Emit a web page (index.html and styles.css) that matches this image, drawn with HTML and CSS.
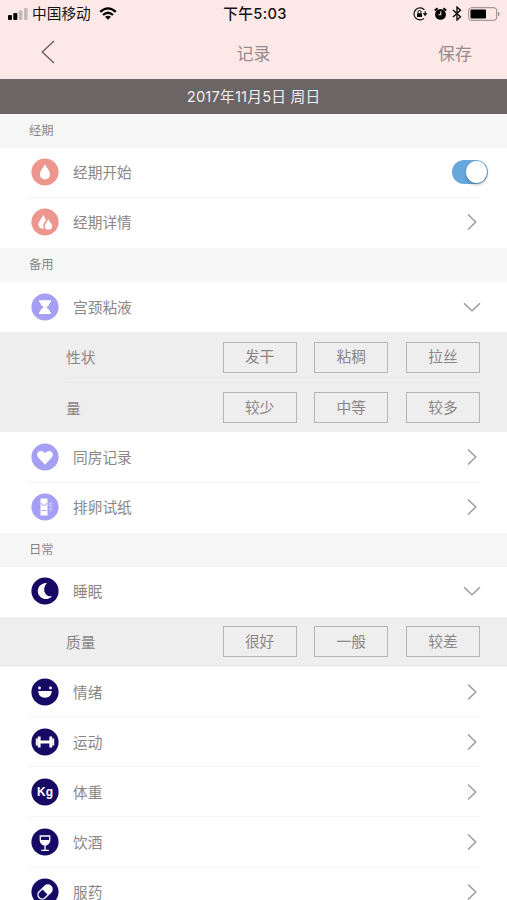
FILE: index.html
```html
<!DOCTYPE html>
<html lang="zh-CN">
<head>
<meta charset="utf-8">
<meta name="viewport" content="width=device-width, initial-scale=1">
<title>记录</title>
<link rel="stylesheet" href="styles.css">
</head>
<body>
<svg width="0" height="0" class="defs" aria-hidden="true">
  <symbol id="right" viewBox="0 0 18 18"><path d="M5 1.5 12.8 9 5 16.5" fill="none" stroke="#999" stroke-width="1.4"/></symbol>
  <symbol id="down" viewBox="0 0 18 18"><path d="M1 5.3 9 12.8 17 5.3" fill="none" stroke="#999" stroke-width="1.4"/></symbol>
</svg>
<header class="top">
  <div class="status">
    <div class="carrier">
      <svg width="20" height="12" viewBox="0 0 20 12"><rect y="7" width="4" height="5" rx="1"/><rect x="5.3" y="5" width="4" height="7" rx="1"/><g fill="#c3b9b9"><rect x="10.8" y="2.5" width="3.7" height="9.5" rx="1"/><rect x="16" y="0" width="3.7" height="12" rx="1"/></g></svg>
      <span>中国移动</span>
      <svg class="wifi" width="18" height="13" viewBox="0 0 18 13"><g fill="none" stroke="#000" stroke-width="2.3"><path d="M1.2 4.9Q9-2.2 16.8 4.9"/><path d="M4 8Q9 3.6 14 8"/></g><path d="M6 9.8Q9 7.5 12 9.8L9 12.8Z"/></svg>
    </div>
    <div class="clock">下午5:03</div>
    <div class="indicators">
      <svg width="15" height="14" viewBox="0 0 15 14"><path d="M11.4 2.8A6 6 0 1 0 11 11.4M12.2 4.2V7" fill="none" stroke="#111" stroke-width="1.2"/><path d="M9.8 6.2h4.6l-2.3 3z"/><rect x="4" y="6.2" width="5" height="3.8" rx=".5"/><path d="M5 6.3V5a1.5 1.5 0 0 1 3 0v1.3" fill="none" stroke="#111"/></svg>
      <svg class="alarm" width="13" height="14" viewBox="0 0 13 14"><circle cx="6.5" cy="7.4" r="5.4"/><path d="M.8 3.6 3.6 1.3M12.2 3.6 9.4 1.3" stroke="#000" stroke-width="2"/><path d="M6.8 4.2v3.5H4.3" fill="none" stroke="#fce9e7" stroke-width="1.1"/></svg>
      <svg class="bt" width="10" height="15" viewBox="0 0 10 15"><path d="M1 4 8.5 10.8 5 14V1L8.5 4.2 1 11" fill="none" stroke="#000" stroke-width="1.3"/></svg>
      <svg class="battery" width="32" height="14" viewBox="0 0 32 14"><rect x=".7" y=".7" width="28" height="12.6" rx="2.8" fill="none" stroke="#8f8685"/><rect x="2.5" y="2.4" width="15.5" height="9.2" rx="1"/><path d="M30 4.8q1.6 1 1.6 2.2T30 9.2z" fill="#8f8685"/></svg>
    </div>
  </div>
  <nav class="nav">
    <svg width="14" height="24" viewBox="0 0 14 24"><path d="M13 1 1.3 12 13 23" fill="none" stroke="#6b6162" stroke-width="1.4"/></svg>
    <h1>记录</h1>
    <span class="save">保存</span>
  </nav>
</header>
<div class="date">2017年11月5日 周日</div>
<main>
  <h2>经期</h2>
  <div class="row"><svg class="icon coral" viewBox="0 0 28 28"><circle cx="14" cy="14" r="13.6"/><path fill="#fff" d="M14 6.2C12.2 9.8 9 12.7 9 16.4a5 5 0 0 0 10 0C19 12.7 15.8 9.8 14 6.2z"/></svg><span>经期开始</span><i class="toggle"></i></div>
  <div class="row last"><svg class="icon coral" viewBox="0 0 28 28"><circle cx="14" cy="14" r="13.6"/><path fill="#fff" d="M12.3 6.8C10.9 10.2 7.5 13.4 7.5 16.4c0 2.6 2 4.4 4.5 4.4 1 0 1-.4.7-1.3-1.1-3.3.6-5.7 2.4-7.3z"/><path fill="#fff" d="M17.4 11.1c-1 2.8-3.6 4.6-3.6 6.8a3.6 3.6 0 0 0 7.3 0c0-2.2-2.7-4-3.7-6.8z"/></svg><span>经期详情</span><svg class="chev"><use href="#right"/></svg></div>
  <h2>备用</h2>
  <div class="row last"><svg class="icon lilac" viewBox="0 0 28 28"><circle cx="14" cy="14" r="13.6"/><path fill="#fff" d="M8 7.3h12v1.6h-.8q-.8 3.3-3.8 5.3 3 2 3.8 5.1h.8v1.6H8v-1.6h.8q.8-3.1 3.8-5.1-3-2-3.8-5.3H8z"/></svg><span>宫颈粘液</span><svg class="chev"><use href="#down"/></svg></div>
  <section class="panel">
    <div class="option"><span>性状</span><button>发干</button><button>粘稠</button><button>拉丝</button></div>
    <div class="option"><span>量</span><button>较少</button><button>中等</button><button>较多</button></div>
  </section>
  <div class="row"><svg class="icon lilac" viewBox="0 0 28 28"><circle cx="14" cy="14" r="13.6"/><path fill="#fff" d="M14 21.8 7.3 14.6C5 11.9 6.4 8 9.7 8c2 0 3.6 1 4.3 2.5C14.7 9 16.3 8 18.3 8c3.3 0 4.7 3.9 2.4 6.6z"/></svg><span>同房记录</span><svg class="chev"><use href="#right"/></svg></div>
  <div class="row last"><svg class="icon lilac" viewBox="0 0 28 28"><circle cx="14" cy="14" r="13.6"/><path fill="#fff" d="M9.5 5.5h7v17h-7z"/><path d="M9.5 10.8h1.8m3.4 0h1.8M10.5 12h5M10.5 17.5h5" stroke="#a6a0f4" stroke-width=".9"/><path d="M18.3 10h2.6v3h-2.6zM18 16h3.3M19.6 14.5v4" fill="none" stroke="#dcd9ff" stroke-width=".8"/></svg><span>排卵试纸</span><svg class="chev"><use href="#right"/></svg></div>
  <h2>日常</h2>
  <div class="row last"><svg class="icon navy" viewBox="0 0 28 28"><circle cx="14" cy="14" r="13.6"/><path fill="#fff" d="M16 6.2a8 8 0 1 0 5 13 6.5 6.5 0 0 1-7.6-4.6c-.8-3.4.4-6.6 2.6-8.4z"/></svg><span>睡眠</span><svg class="chev"><use href="#down"/></svg></div>
  <section class="panel">
    <div class="option"><span>质量</span><button>很好</button><button>一般</button><button>较差</button></div>
  </section>
  <div class="row"><svg class="icon navy" viewBox="0 0 28 28"><circle cx="14" cy="14" r="13.6"/><g fill="#fff"><circle cx="8.5" cy="10" r="1.4"/><circle cx="19.5" cy="10" r="1.4"/><path d="M7.2 13h13.6q-.4 6.8-6.8 6.8T7.2 13z"/></g></svg><span>情绪</span><svg class="chev"><use href="#right"/></svg></div>
  <div class="row"><svg class="icon navy" viewBox="0 0 28 28"><circle cx="14" cy="14" r="13.6"/><path d="M8.2 8.6v10.8M19.8 8.6v10.8M9 14h10" stroke="#fff" stroke-width="2.8"/><path d="M5.8 10.5v7M22.2 10.5v7" stroke="#fff" stroke-width="2"/></svg><span>运动</span><svg class="chev"><use href="#right"/></svg></div>
  <div class="row"><svg class="icon navy" viewBox="0 0 28 28"><circle cx="14" cy="14" r="13.6"/><text x="14" y="18" text-anchor="middle">Kg</text></svg><span>体重</span><svg class="chev"><use href="#right"/></svg></div>
  <div class="row"><svg class="icon navy" viewBox="0 0 28 28"><circle cx="14" cy="14" r="13.6"/><path d="M9.3 8h9.4v4.3a4.7 4.7 0 0 1-9.4 0zM14 17v5M10.2 22.3h7.6" fill="none" stroke="#fff" stroke-width="1.3"/><path d="M9.3 12h9.4a4.7 4.7 0 0 1-9.4 0z" fill="#fff"/></svg><span>饮酒</span><svg class="chev"><use href="#right"/></svg></div>
  <div class="row"><svg class="icon navy" viewBox="0 0 28 28"><circle cx="14" cy="14" r="13.6"/><g transform="rotate(-45 14 14)"><rect x="5.8" y="9.8" width="16.4" height="8.4" rx="4.2" fill="none" stroke="#fff" stroke-width="1.4"/><path d="M14 9.8h4a4.2 4.2 0 0 1 0 8.4h-4z" fill="#fff"/></g></svg><span>服药</span><svg class="chev"><use href="#right"/></svg></div>
</main>
</body>
</html>
```
FILE: styles.css
```css
* { box-sizing: border-box; }
html { height: 900px; overflow: hidden; }
body {
  margin: 0;
  height: 900px;
  overflow: hidden;
  background: #fff;
  color: #8b8685;
  font-family: "Liberation Sans", "Noto Sans CJK SC", sans-serif;
}
.defs { position: absolute; }
svg { display: block; flex: none; }
.top { height: 79px; background: #fce9e7; }
.status {
  height: 26px;
  padding: 1px 7px 0 8px;
  display: grid;
  grid-template-columns: 1fr auto 1fr;
  align-items: center;
  color: #171313;
  font-size: 14.7px;
  line-height: 22px;
}
.carrier { display: flex; align-items: center; }
.carrier span { margin-left: 4px; white-space: nowrap; }
.wifi { margin-left: 8px; }
.clock { padding-left: 2px; font-family: Inter, "Noto Sans CJK SC", sans-serif; font-weight: 500; font-size: 14.7px; letter-spacing: .3px; line-height: 24px; }
.indicators { display: flex; justify-content: flex-end; align-items: center; }
.alarm { margin-left: 6px; }
.bt { margin-left: 5px; }
.battery { margin-left: 6px; }
.nav {
  height: 52px;
  padding: 0 35px 0 41px;
  display: grid;
  grid-template-columns: 1fr auto 1fr;
  align-items: center;
  color: #968b8c;
  font-size: 17px;
}
h1 { margin: 0 6px 0 0; font-size: 17px; font-weight: 400; }
.save { justify-self: end; }
.date {
  height: 34.5px;
  background: #6b6566;
  color: #f2eeee;
  display: flex;
  align-items: center;
  justify-content: center;
  font: 14.7px/34px Inter, "Noto Sans CJK SC", sans-serif;
  letter-spacing: .2px;
  padding-top: 1px;
}
h2 {
  margin: 0;
  height: 34.1px;
  padding-left: 29px;
  background: #f6f6f6;
  font-size: 12.3px;
  font-weight: 400;
  line-height: 34px;
}
.row {
  height: 50.15px;
  margin: 0 26px 0 28px;
  padding: 0 0 0 3px;
  display: flex;
  align-items: center;
  border-bottom: 1px solid #f5f5f5;
  font-size: 14.7px;
}
.row.last { border-color: transparent; }
.row span { padding-bottom: 1px; }
.icon { width: 28px; height: 28px; margin-right: 14px; }
.coral { fill: #ec968e; }
.lilac { fill: #a6a0f4; }
.navy { fill: #160a65; }
.icon text { fill: #fff; font: bold 12px "Liberation Sans", sans-serif; }
.chev { width: 18px; height: 18px; margin-left: auto; }
.toggle {
  width: 36px;
  height: 24px;
  margin: 0 -7px 0 auto;
  border-radius: 12px;
  background: #68a7dc;
  display: flex;
  justify-content: flex-end;
  padding: 1px;
}
.toggle::after {
  content: "";
  width: 21px;
  height: 22px;
  border-radius: 50%;
  background: #fff;
  box-shadow: 0 2px 3px rgba(0, 0, 0, .25);
}
.panel { background: #eee; }
.option {
  height: 50.15px;
  margin: 0 26px 0 66px;
  padding-right: 1px;
  display: flex;
  align-items: center;
  gap: 17.7px;
  font-size: 14.7px;
}
.option + .option { border-top: 1px solid #e8e8e8; }
.option span { margin-right: auto; padding-bottom: 1px; }
.option button {
  width: 74px;
  height: 31px;
  padding: 0;
  border: 1px solid #b5b5b5;
  background: transparent;
  color: inherit;
  font: inherit;
  line-height: 28px;
}
```
